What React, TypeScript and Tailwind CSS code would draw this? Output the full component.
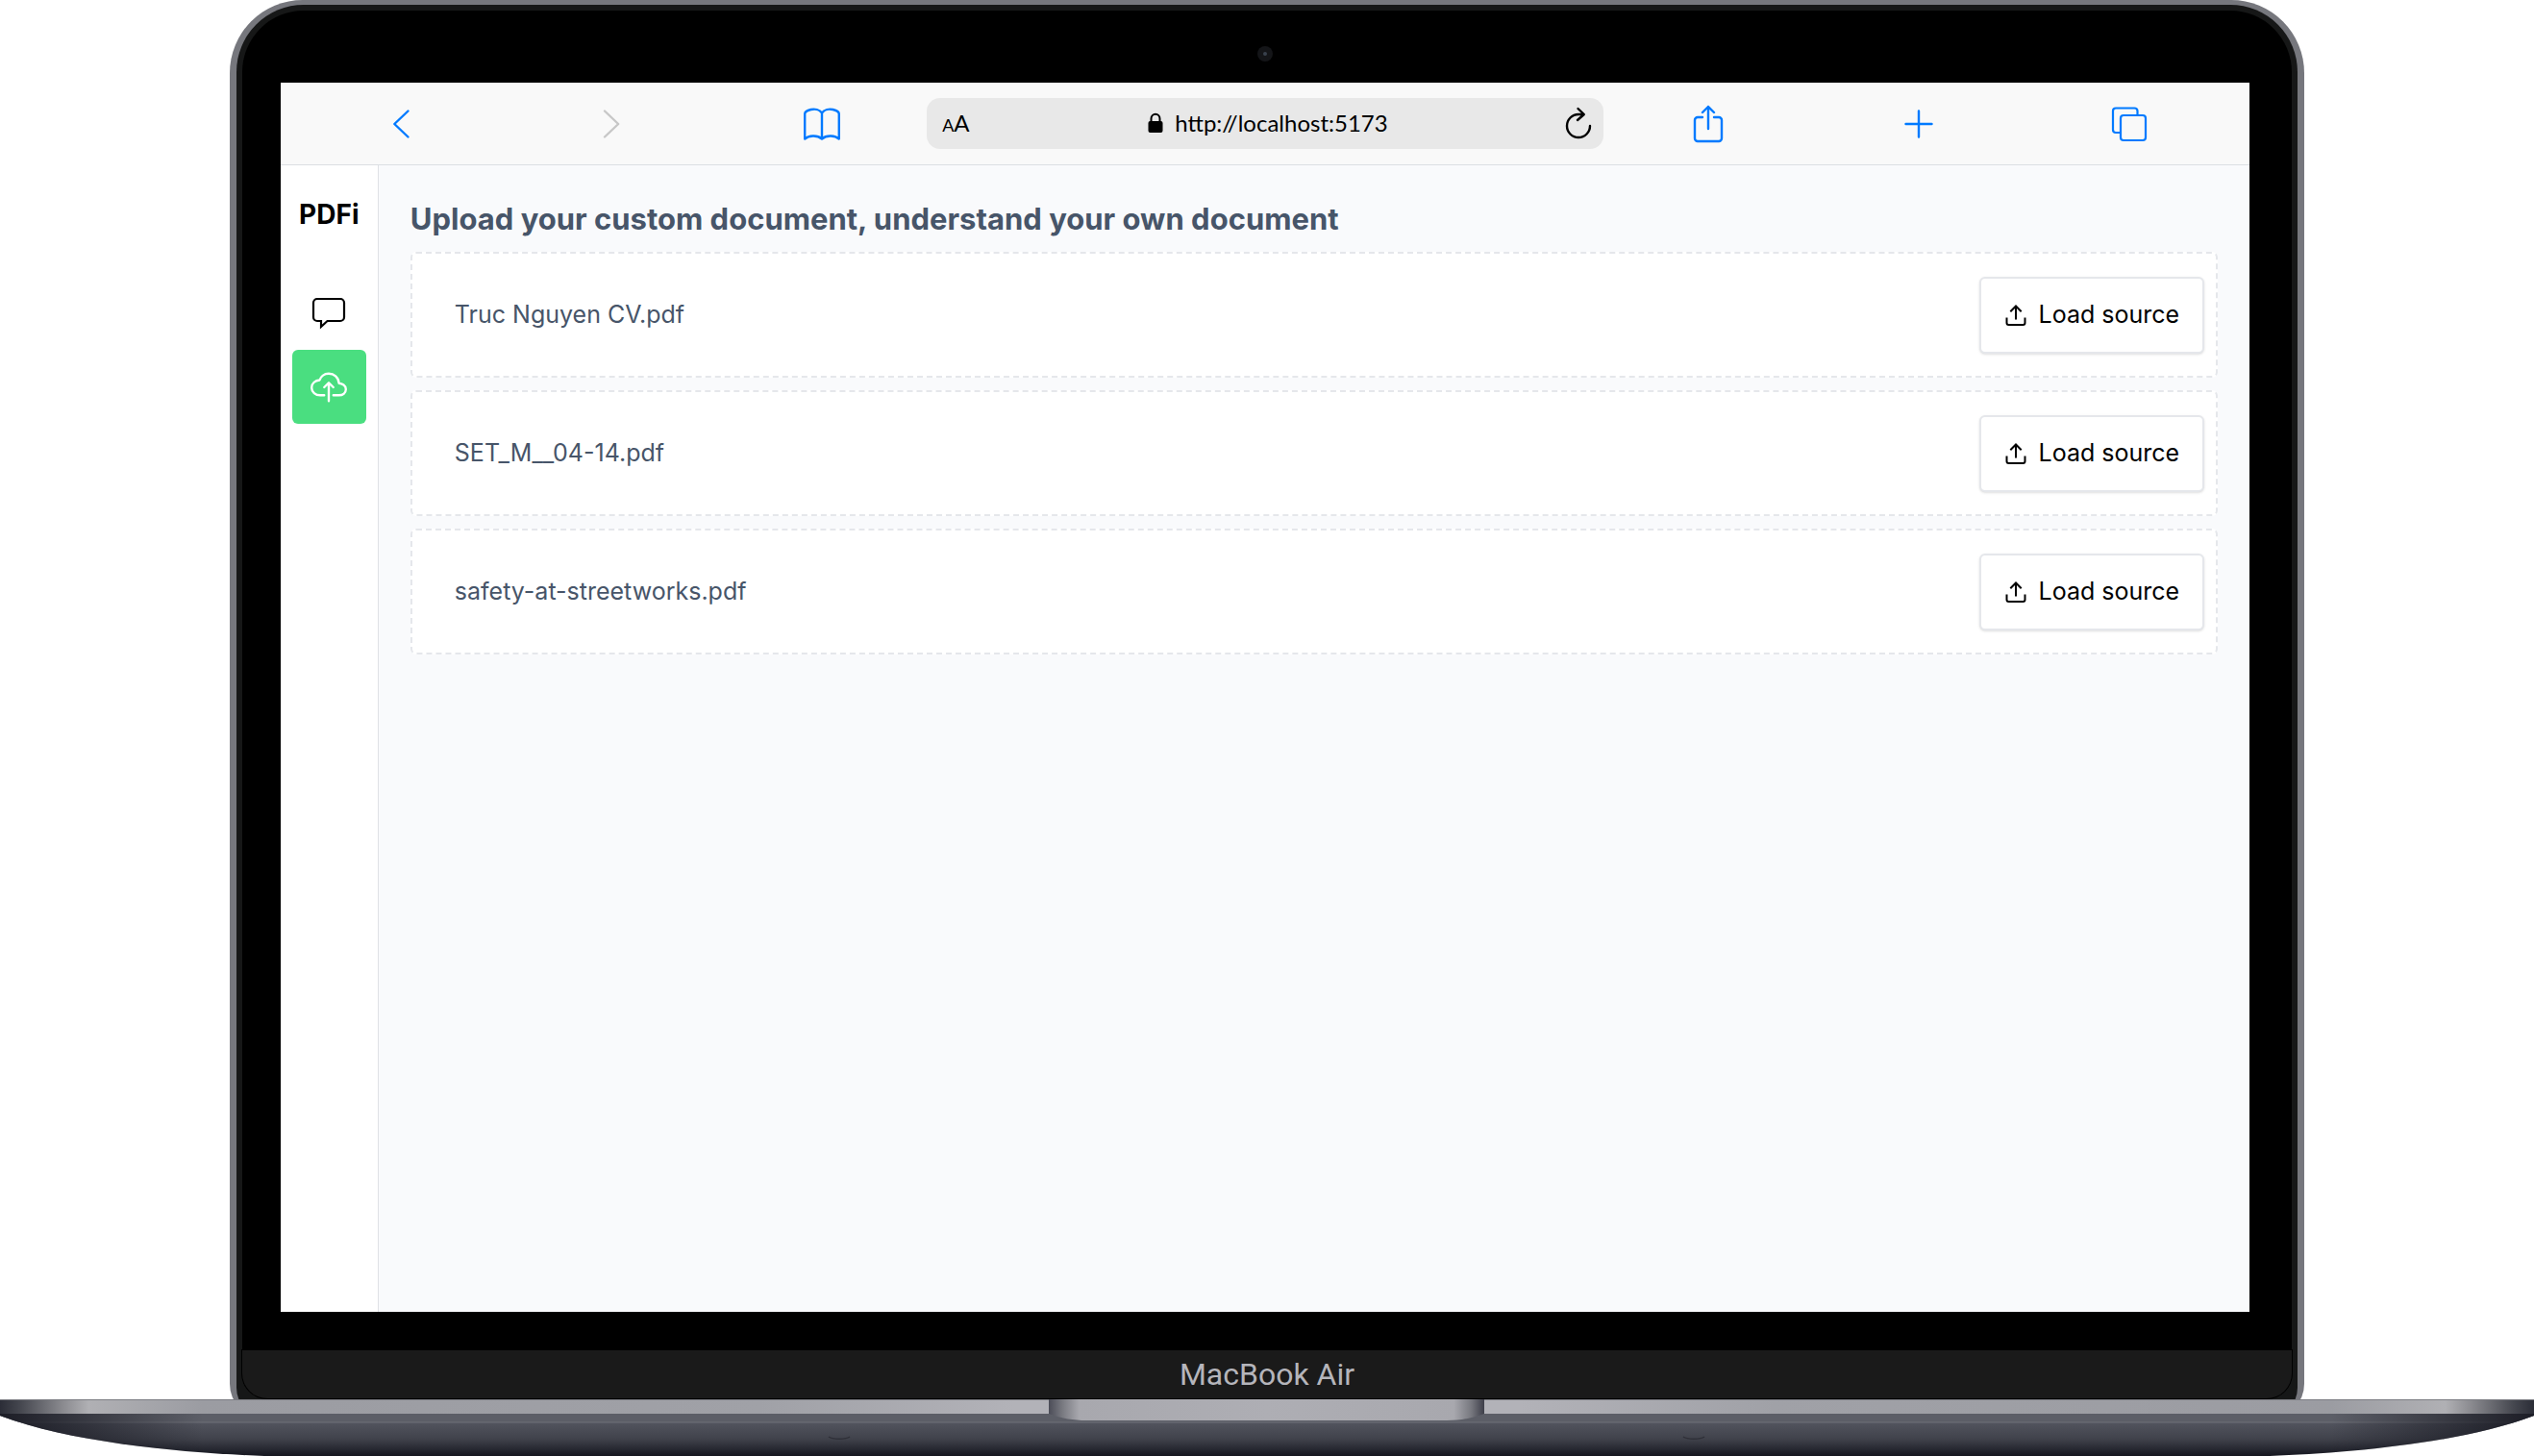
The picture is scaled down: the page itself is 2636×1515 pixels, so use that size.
import React from "react";

const BLUE = "#007aff";

const files = ["Truc Nguyen CV.pdf", "SET_M__04-14.pdf", "safety-at-streetworks.pdf"];

function ToolButton({ label, disabled, children }: { label: string; disabled?: boolean; children: React.ReactNode }) {
  return (
    <button type="button" aria-label={label} disabled={disabled} className="flex h-full flex-1 items-center justify-center">
      {children}
    </button>
  );
}

function Toolbar() {
  return (
    <header className="flex h-[86px] shrink-0 items-center border-b border-[#dcdfe3] bg-[#f9f9f9] px-4">
      <ToolButton label="Back">
        <svg width="40" height="40" viewBox="0 0 40 40" fill="none" stroke={BLUE} strokeWidth="2.4" strokeLinecap="round" strokeLinejoin="round">
          <path d="M27.500 6.500 13.300 20l14.200 13.500" />
        </svg>
      </ToolButton>
      <ToolButton label="Forward" disabled>
        <svg width="40" height="40" viewBox="0 0 40 40" fill="none" stroke="#c7c7c7" strokeWidth="2.4" strokeLinecap="round" strokeLinejoin="round">
          <path d="M13 6.500 27.200 20 13 33.500" />
        </svg>
      </ToolButton>
      <ToolButton label="Bookmarks">
        <svg width="40" height="40" viewBox="0 0 40 40" fill="none" stroke={BLUE} strokeWidth="2.4" strokeLinejoin="round">
          <path d="M20 8.500C17.500 5 12.500 4 8.500 5 4.500 6 2.200 7.500 2.200 9.500V35.500C6 32 15 31 20 35.500 25 31 34 32 37.800 35.500V9.500C37.800 7.500 35.500 6 31.500 5 27.500 4 22.500 5 20 8.500ZM20 8.500V35.500" />
        </svg>
      </ToolButton>
      <div className="flex h-[53px] w-[34.9%] shrink-0 items-center rounded-[14px] bg-[#e8e8e8] pr-2.5 pb-0.5 pl-4">
        <button type="button" aria-label="Text size" className="flex w-10 items-baseline font-['Lato',sans-serif] leading-none text-black">
          <span className="text-[18px]">A</span>
          <span className="text-[24px]">A</span>
        </button>
        <div className="flex flex-1 items-center justify-center gap-3">
          <svg width="16" height="22" viewBox="0 0 16 22">
            <rect x="0.500" y="9" width="15" height="12" rx="2" />
            <path d="M3.500 10V6.500a4.500 4.800 0 0 1 9 0V10" fill="none" stroke="#000" strokeWidth="2" />
          </svg>
          <span className="font-['Lato',sans-serif] text-2xl text-black">http://localhost:5173</span>
        </div>
        <button type="button" aria-label="Reload" className="flex w-10 justify-end">
          <svg width="32" height="36" viewBox="0 0 32 36" fill="none" stroke="#000" strokeWidth="2.400" strokeLinecap="round" strokeLinejoin="round">
            <path d="M28 21A12 12 0 1 1 16 9H21.500M15.500 3 21.800 9 15 15" />
          </svg>
        </button>
      </div>
      <ToolButton label="Share">
        <svg width="40" height="40" viewBox="0 0 40 40" fill="none" stroke={BLUE} strokeWidth="2.400" strokeLinecap="round" strokeLinejoin="round">
          <path d="M14 13H9a3 3 0 0 0-3 3V35a3 3 0 0 0 3 3H31a3 3 0 0 0 3-3V16a3 3 0 0 0-3-3H26M20 25V2M14 8 20 2 26 8" />
        </svg>
      </ToolButton>
      <ToolButton label="New tab">
        <svg width="40" height="40" viewBox="0 0 40 40" fill="none" stroke={BLUE} strokeWidth="2.400" strokeLinecap="round">
          <path d="M20 6.500V33.500M6.500 20H33.500" />
        </svg>
      </ToolButton>
      <ToolButton label="Tabs">
        <svg width="40" height="40" viewBox="0 0 40 40" fill="none" stroke={BLUE} strokeWidth="2.200">
          <path d="M28.500 10.500V6.500a3 3 0 0 0-3-3H6a3 3 0 0 0-3 3V26a3 3 0 0 0 3 3h4.500" />
          <rect x="11" y="11" width="26" height="26" rx="3" />
        </svg>
      </ToolButton>
    </header>
  );
}

function Sidebar() {
  return (
    <nav className="flex w-[102px] shrink-0 flex-col items-center border-r border-[#dfe1e5] bg-white pt-[31px]">
      <div className="text-[28px] leading-10 font-bold text-black">PDFi</div>
      <div className="mt-11 flex flex-col">
        <a href="#chat" aria-label="Chat" className="flex size-[77px] items-center justify-center rounded-md">
          <svg width="38" height="38" viewBox="0 0 38 38" fill="none" stroke="#000" strokeWidth="2.200">
            <path d="M7 4H31a4 4 0 0 1 4 4V23a4 4 0 0 1-4 4H17.500L11 33V27H7a4 4 0 0 1-4-4V8a4 4 0 0 1 4-4Z" />
          </svg>
        </a>
        <a href="#upload" aria-label="Upload" className="flex size-[77px] items-center justify-center rounded-md bg-[#4ade80]">
          <svg width="38" height="38" viewBox="0 0 512 512" fill="none" stroke="#fff" strokeWidth="32" strokeLinecap="round" strokeLinejoin="round">
            <path d="M320 367.790h76c55 0 100-29.210 100-83.600s-53-81.470-96-83.600c-8.890-85.060-71-136.800-144-136.800-69 0-113.440 45.790-128 91.200-60 5.700-112 43.880-112 106.400s54 106.400 120 106.400h56" />
            <path d="m320 255.790-64-64-64 64M256 448.210V207.790" />
          </svg>
        </a>
      </div>
    </nav>
  );
}

function FileRow({ name }: { name: string }) {
  return (
    <li className="flex h-[131px] items-center justify-between rounded-md border-2 border-dashed border-[#e5e7eb] bg-white pr-3 pl-11 text-[25px]">
      <span className="text-[#475569]">{name}</span>
      <button type="button" className="flex h-20 items-center gap-3 rounded-md border-2 border-[#e5e7eb] bg-white px-6 text-black shadow-sm">
        <svg width="24" height="24" viewBox="0 0 24 24" fill="none" stroke="#000" strokeWidth="2">
          <path d="M2.500 14.500V20a2 2 0 0 0 2 2H19.500A2 2 0 0 0 21.500 20V14.500M12 16.500V2.500M6.300 8.300 12 2.500 17.700 8.300" />
        </svg>
        Load source
      </button>
    </li>
  );
}

function Base() {
  return (
    <svg aria-hidden="true" className="relative -mt-5 block h-[59px] w-full shrink-0" viewBox="0 0 2636 59" preserveAspectRatio="none">
      <defs>
        <linearGradient id="body" x2="0" y2="1">
          <stop offset="0.400" stopColor="#53555f" />
          <stop offset="0.700" stopColor="#40424b" />
          <stop offset="1" stopColor="#15161f" />
        </linearGradient>
        <linearGradient id="deck">
          <stop offset="0" stopColor="#2b2d37" />
          <stop offset="0.008" stopColor="#45474f" />
          <stop offset="0.025" stopColor="#8b8b90" />
          <stop offset="0.035" stopColor="#b0b0b4" />
          <stop offset="0.080" stopColor="#9b9ca2" />
          <stop offset="0.300" stopColor="#a0a1a7" />
          <stop offset="0.400" stopColor="#b2b2b8" />
          <stop offset="0.600" stopColor="#b2b2b8" />
          <stop offset="0.700" stopColor="#a0a1a7" />
          <stop offset="0.920" stopColor="#9b9ca2" />
          <stop offset="0.965" stopColor="#b0b0b4" />
          <stop offset="0.975" stopColor="#8b8b90" />
          <stop offset="0.992" stopColor="#45474f" />
          <stop offset="1" stopColor="#2b2d37" />
        </linearGradient>
        <linearGradient id="edge">
          <stop offset="0" stopColor="#15161f" stopOpacity="0.900" />
          <stop offset="0.080" stopColor="#15161f" stopOpacity="0" />
          <stop offset="0.920" stopColor="#15161f" stopOpacity="0" />
          <stop offset="1" stopColor="#15161f" stopOpacity="0.900" />
        </linearGradient>
        <linearGradient id="notch">
          <stop offset="0" stopColor="#4b4c57" />
          <stop offset="0.030" stopColor="#77787f" />
          <stop offset="0.070" stopColor="#a8a8ae" />
          <stop offset="0.500" stopColor="#aeaeb4" />
          <stop offset="0.930" stopColor="#a8a8ae" />
          <stop offset="0.970" stopColor="#77787f" />
          <stop offset="1" stopColor="#3d3e49" />
        </linearGradient>
      </defs>
      <path d="M0 0H2636V17C2560 46 2440 56 2361 59H275C196 56 76 46 0 17Z" fill="url(#body)" />
      <path d="M0 15H2636V17C2625 21 2617 24 2614 24H22C19 24 11 21 0 17Z" fill="#5c5e67" />
      <path d="M22 24H2614" stroke="#6e7078" />
      <path d="M0 0H2636V17C2560 46 2440 56 2361 59H275C196 56 76 46 0 17Z" fill="url(#edge)" />
      <path d="M0 0H2636V15H0Z" fill="url(#deck)" />
      <path d="M0 0.500H2636" stroke="#7b7c82" />
      <path d="M1091 0H1544V15C1530 20 1518 22 1505 22H1130C1117 22 1105 20 1091 15Z" fill="url(#notch)" />
      <g fill="none" stroke="#2f3038" strokeWidth="1.500">
        <path d="M862 39c4 3 18 3 22 0" />
        <path d="M1751 39c4 3 18 3 22 0" />
      </g>
    </svg>
  );
}

export default function App() {
  return (
    <div className="flex min-h-screen flex-col overflow-hidden bg-white font-['Inter',sans-serif]">
      <div className="mx-[9.060%] flex flex-1 flex-col rounded-t-[76px] rounded-b-[36px] bg-[#76777d] px-[7px] pt-[5px]">
        <div className="flex flex-1 flex-col rounded-t-[70px] rounded-b-[32px] bg-[#161717] px-[6px] pt-[6px] pb-[21px]">
          <div className="flex flex-1 flex-col rounded-t-[64px] bg-black pr-11 pl-10">
            <div className="flex h-[75px] items-center justify-center pt-[15px]">
              <div className="flex size-4 items-center justify-center rounded-full bg-[#141518]">
                <div className="size-1 rounded-full bg-[#39414d]" />
              </div>
            </div>
            <div className="flex flex-1 flex-col bg-[#f9fafc]">
              <Toolbar />
              <div className="flex flex-1">
                <Sidebar />
                <main className="flex-1 px-[33px] pt-[31px]">
                  <h1 className="text-[31px] leading-[50px] font-bold text-[#475569]">
                    Upload your custom document, understand your own document
                  </h1>
                  <ul className="mt-[9px] flex flex-col gap-[13px]">
                    {files.map((name) => (
                      <FileRow key={name} name={name} />
                    ))}
                  </ul>
                </main>
              </div>
            </div>
            <div className="h-10" />
          </div>
          <div className="flex h-[50px] items-center justify-center rounded-b-[26px] bg-[#1a1a1a] font-['Roboto',sans-serif] text-[32px] text-[#b5b5bb] shadow-[0_0_0_1px_#000]">
            MacBook Air
          </div>
        </div>
      </div>
      <Base />
    </div>
  );
}
